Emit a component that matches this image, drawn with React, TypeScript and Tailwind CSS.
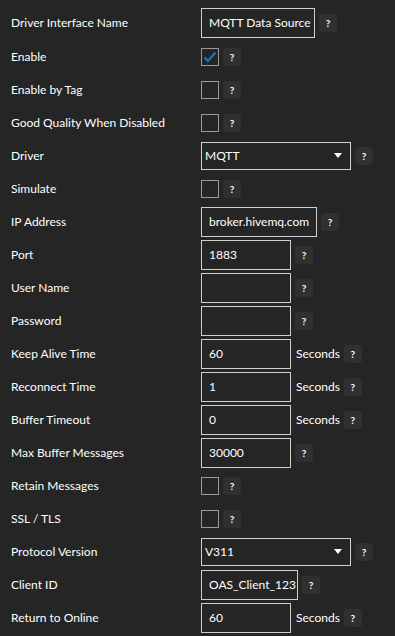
import React from 'react';

const font = { fontFamily: 'Lato, "Noto Sans", sans-serif' };

function Help() {
  return (
    <span className="ml-[4px] flex h-[18px] w-[18px] shrink-0 items-center justify-center rounded-[3px] bg-[#303030] text-[10px] font-bold leading-none text-white">
      ?
    </span>
  );
}

function TextBox({ value, width }: { value: string; width: string }) {
  return (
    <div className={`flex h-[30px] ${width} items-center overflow-hidden border border-[#cfcfcf] pl-[7px] text-[12px] text-white whitespace-nowrap`}>
      {value}
    </div>
  );
}

function Check({ on }: { on?: boolean }) {
  return (
    <span className="flex h-[18px] w-[18px] shrink-0 items-center justify-center border border-[#9a9a9a]">
      {on && (
        <svg width="14" height="12" viewBox="0 0 14 12">
          <path d="M1.5 6.5 L5 10 L12.5 1.5" fill="none" stroke="#1a78b8" strokeWidth="2.2" />
        </svg>
      )}
    </span>
  );
}

function Select({ value }: { value: string }) {
  return (
    <div className="flex h-[28px] w-[150px] items-center justify-between border border-[#cfcfcf] pl-[3px] pr-[8px] text-[12px] text-white">
      <span>{value}</span>
      <svg width="8" height="5" viewBox="0 0 8 5">
        <path d="M0 0 H8 L4 5 Z" fill="#ffffff" />
      </svg>
    </div>
  );
}

function Seconds() {
  return <span className="ml-[5px] text-[12px] text-white">Seconds</span>;
}

type Row = { label: string; control: React.ReactNode; first?: boolean };

const rows: Row[] = [
  { label: 'Driver Interface Name', first: true, control: <><TextBox value="MQTT Data Source" width="w-[114px]" /><Help /></> },
  { label: 'Enable', control: <><Check on /><Help /></> },
  { label: 'Enable by Tag', control: <><Check /><Help /></> },
  { label: 'Good Quality When Disabled', control: <><Check /><Help /></> },
  { label: 'Driver', control: <><Select value="MQTT" /><Help /></> },
  { label: 'Simulate', control: <><Check /><Help /></> },
  { label: 'IP Address', control: <><TextBox value="broker.hivemq.com" width="w-[116px]" /><Help /></> },
  { label: 'Port', control: <><TextBox value="1883" width="w-[90px]" /><Help /></> },
  { label: 'User Name', control: <><TextBox value="" width="w-[90px]" /><Help /></> },
  { label: 'Password', control: <><TextBox value="" width="w-[90px]" /><Help /></> },
  { label: 'Keep Alive Time', control: <><TextBox value="60" width="w-[90px]" /><Seconds /><Help /></> },
  { label: 'Reconnect Time', control: <><TextBox value="1" width="w-[90px]" /><Seconds /><Help /></> },
  { label: 'Buffer Timeout', control: <><TextBox value="0" width="w-[90px]" /><Seconds /><Help /></> },
  { label: 'Max Buffer Messages', control: <><TextBox value="30000" width="w-[90px]" /><Help /></> },
  { label: 'Retain Messages', control: <><Check /><Help /></> },
  { label: 'SSL / TLS', control: <><Check /><Help /></> },
  { label: 'Protocol Version', control: <><Select value="V311" /><Help /></> },
  { label: 'Client ID', control: <><TextBox value="OAS_Client_123" width="w-[97px]" /><Help /></> },
  { label: 'Return to Online', control: <><TextBox value="60" width="w-[90px]" /><Seconds /><Help /></> },
];

export default function App() {
  return (
    <div className="h-[636px] w-[395px] overflow-hidden bg-[#252525] pt-[6px]" style={font}>
      {rows.map((r) => (
        <div key={r.label} className={`flex items-center ${r.first ? 'h-[34px]' : 'h-[33px]'}`}>
          <div className="w-[200px] shrink-0 pl-[11px] text-[12px] text-white">{r.label}</div>
          <div className="flex items-center pl-[1px]">{r.control}</div>
        </div>
      ))}
    </div>
  );
}
